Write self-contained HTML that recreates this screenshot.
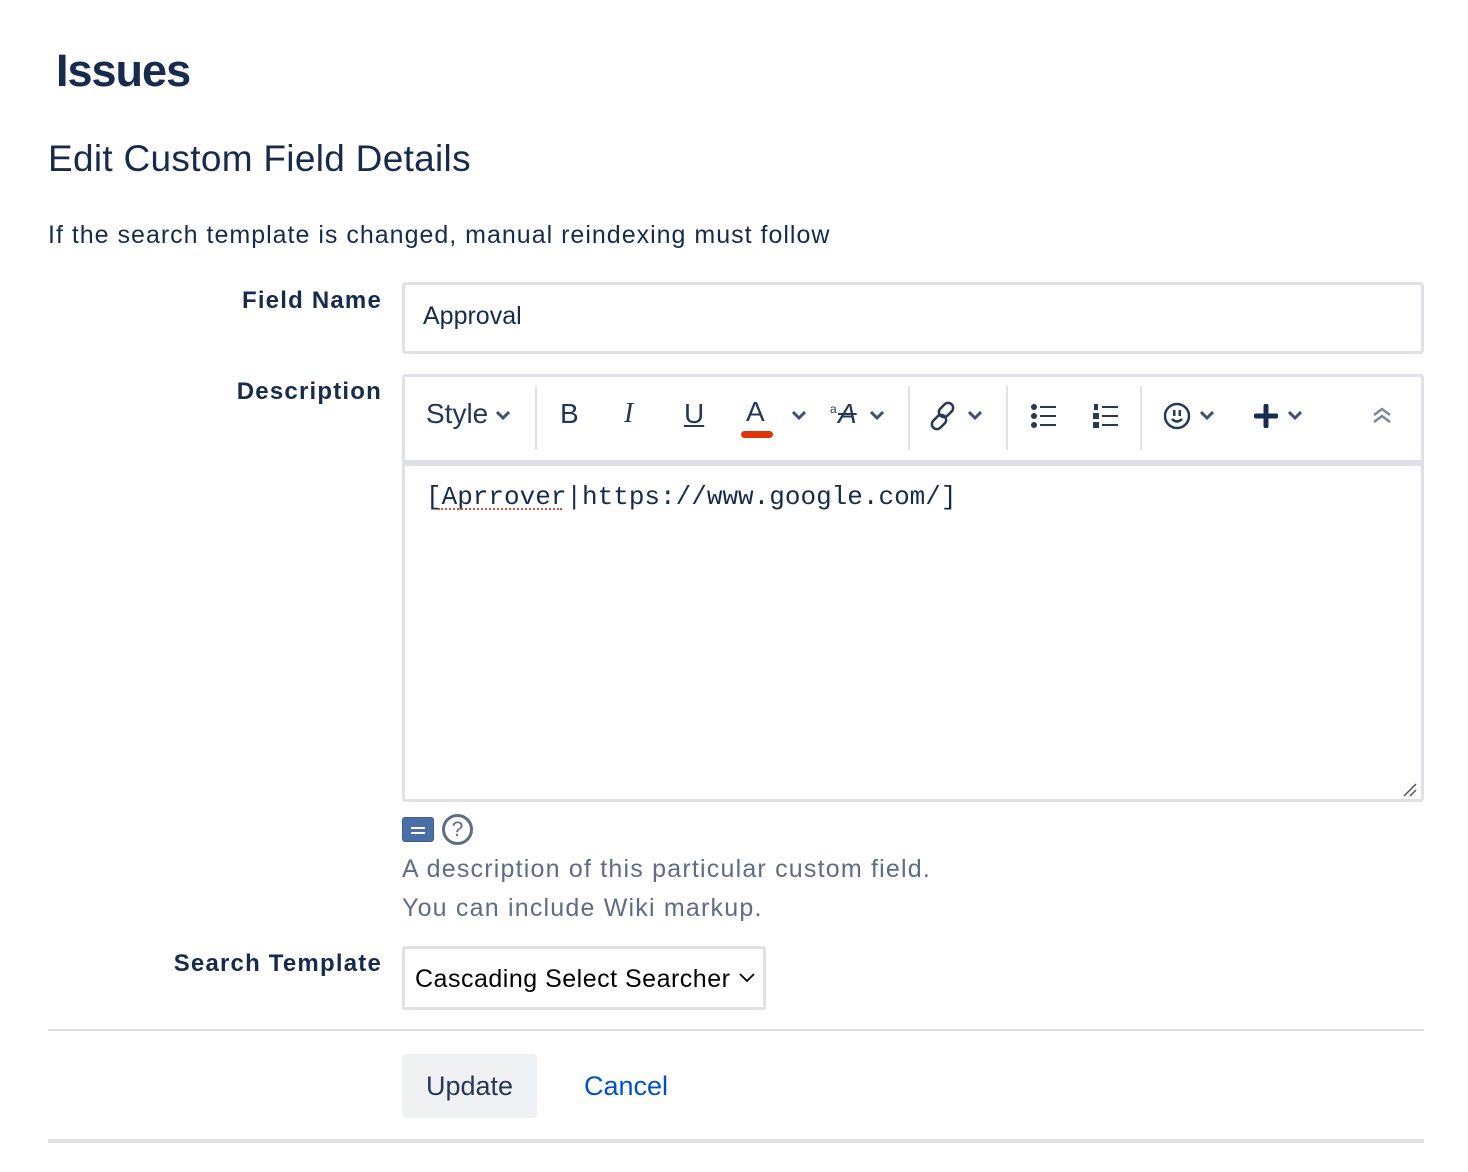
<!DOCTYPE html>
<html><head><meta charset="utf-8"><style>
*{box-sizing:border-box;margin:0;padding:0}
body{width:1468px;height:1172px;background:#fff;font-family:"Liberation Sans",sans-serif;color:#172b4d;position:relative;overflow:hidden}
.a{position:absolute}
h1{position:absolute;left:56px;top:45px;font-size:45px;font-weight:600;letter-spacing:-1px}
h2{position:absolute;left:48px;top:138px;font-size:37px;font-weight:500;letter-spacing:0.3px}
.lbl{position:absolute;right:1086px;font-size:24px;font-weight:bold;text-align:right;white-space:nowrap;letter-spacing:1.2px}
.tb{color:#253858;font-size:28px}
.sep{position:absolute;top:386px;width:2px;height:64px;background:#dfe1e6}
.chev{position:absolute;top:408px}
</style></head><body>
<h1>Issues</h1>
<h2>Edit Custom Field Details</h2>
<div class="a" style="left:48px;top:221px;font-size:25px;letter-spacing:1px">If the search template is changed, manual reindexing must follow</div>

<div class="lbl" style="top:287px">Field Name</div>
<div class="a" style="left:402px;top:282px;width:1022px;height:72px;border:3px solid #dfe1e6;border-radius:4px;padding:17px 18px;font-size:25px">Approval</div>

<div class="lbl" style="top:378px">Description</div>
<div class="a" style="left:402px;top:374px;width:1022px;height:428px;border:3px solid #dfe1e6;border-radius:4px"></div>
<div class="a" style="left:405px;top:460px;width:1016px;height:6px;background:#dfe1e6"></div>
<div class="a tb" style="left:426px;top:398px;font-size:28px">Style</div>
<svg class="chev" style="left:494px" width="18" height="14" viewBox="0 0 18 14"><path d="M3 4l6 6 6-6" stroke="#42526e" stroke-width="3" fill="none"/></svg>
<div class="sep" style="left:535px"></div>
<div class="a tb" style="left:560px;top:398px">B</div>
<div class="a tb" style="left:624px;top:398px;font-style:italic;font-family:'Liberation Serif',serif">I</div>
<div class="a tb" style="left:684px;top:398px;text-decoration:underline">U</div>
<div class="a tb" style="left:746px;top:396px">A</div>
<div class="a" style="left:741px;top:431px;width:32px;height:7px;border-radius:4px;background:#de350b"></div>
<svg class="chev" style="left:790px" width="18" height="14" viewBox="0 0 18 14"><path d="M3 4l6 6 6-6" stroke="#42526e" stroke-width="3" fill="none"/></svg>
<div class="a" style="left:830px;top:402px;font-size:12px;color:#253858">a</div>
<div class="a tb" style="left:838px;top:398px;font-style:italic;text-decoration:line-through">A</div>
<svg class="chev" style="left:868px" width="18" height="14" viewBox="0 0 18 14"><path d="M3 4l6 6 6-6" stroke="#42526e" stroke-width="3" fill="none"/></svg>
<div class="sep" style="left:908px"></div>
<svg class="a" style="left:928px;top:400px" width="32" height="32" viewBox="0 0 32 32"><g stroke="#253858" stroke-width="2.5" fill="none"><rect x="13" y="2" width="10" height="16" rx="5" transform="rotate(45 18 10)"/><rect x="6" y="14" width="10" height="16" rx="5" transform="rotate(45 11 22)"/></g></svg>
<svg class="chev" style="left:966px" width="18" height="14" viewBox="0 0 18 14"><path d="M3 4l6 6 6-6" stroke="#42526e" stroke-width="3" fill="none"/></svg>
<div class="sep" style="left:1006px"></div>
<svg class="a" style="left:1030px;top:402px" width="28" height="28" viewBox="0 0 28 28"><g fill="#253858"><circle cx="4" cy="5" r="3"/><circle cx="4" cy="14" r="3"/><circle cx="4" cy="23" r="3"/><rect x="10" y="4" width="16" height="2"/><rect x="10" y="13" width="16" height="2"/><rect x="10" y="22" width="16" height="2"/></g></svg>
<svg class="a" style="left:1092px;top:402px" width="28" height="28" viewBox="0 0 28 28"><g fill="#253858"><rect x="2" y="2" width="4" height="6"/><rect x="1" y="11" width="6" height="6"/><rect x="1" y="20" width="6" height="6"/><rect x="10" y="4" width="16" height="2"/><rect x="10" y="13" width="16" height="2"/><rect x="10" y="22" width="16" height="2"/></g></svg>
<div class="sep" style="left:1140px"></div>
<svg class="a" style="left:1162px;top:401px" width="30" height="30" viewBox="0 0 30 30"><circle cx="15" cy="15" r="12" stroke="#253858" stroke-width="2.5" fill="none"/><rect x="11" y="9" width="2.5" height="6" fill="#253858"/><rect x="16.5" y="9" width="2.5" height="6" fill="#253858"/><path d="M10 18q5 5 10 0" stroke="#253858" stroke-width="2.5" fill="none"/></svg>
<svg class="chev" style="left:1198px" width="18" height="14" viewBox="0 0 18 14"><path d="M3 4l6 6 6-6" stroke="#42526e" stroke-width="3" fill="none"/></svg>
<svg class="a" style="left:1254px;top:404px" width="24" height="24" viewBox="0 0 24 24"><path d="M12 2v20M2 12h20" stroke="#172b4d" stroke-width="5" stroke-linecap="round"/></svg>
<svg class="chev" style="left:1286px" width="18" height="14" viewBox="0 0 18 14"><path d="M3 4l6 6 6-6" stroke="#42526e" stroke-width="3" fill="none"/></svg>
<svg class="a" style="left:1370px;top:406px" width="24" height="20" viewBox="0 0 24 20"><path d="M4 9l8-6 8 6M4 16l8-6 8 6" stroke="#7a869a" stroke-width="2.5" fill="none"/></svg>
<div class="a" style="left:426px;top:482px;font-family:'Liberation Mono',monospace;font-size:26px;color:#172b4d">[Aprrover|https://www.google.com/]</div>
<div class="a" style="left:438px;top:508px;width:124px;border-top:2px dotted #e5493a"></div>
<svg class="a" style="left:1402px;top:782px" width="16" height="16" viewBox="0 0 16 16"><path d="M2 14L14 2M8 14L14 8" stroke="#555" stroke-width="1.5"/></svg>

<div class="a" style="left:402px;top:817px;width:32px;height:25px;background:#4a6fa5;border-radius:3px;border:1px solid #3d5f8f"></div>
<div class="a" style="left:411px;top:827px;width:14px;height:2px;background:#fff"></div>
<div class="a" style="left:411px;top:832px;width:14px;height:2px;background:#fff"></div>
<div class="a" style="left:442px;top:814px;width:31px;height:31px;border:3px solid #5e6c84;border-radius:50%;text-align:center;font-size:21px;line-height:26px;color:#5e6c84">?</div>
<div class="a" style="left:402px;top:850px;font-size:25px;color:#5e6c84;line-height:39px;letter-spacing:1.2px">A description of this particular custom field.<br>You can include Wiki markup.</div>

<div class="lbl" style="top:950px">Search Template</div>
<div class="a" style="left:402px;top:946px;width:364px;height:64px;border:3px solid #dfe1e6;border-radius:3px;padding:16px 10px;font-size:25px;color:#000;letter-spacing:0.5px">Cascading Select Searcher</div>
<svg class="a" style="left:738px;top:971px" width="18" height="12" viewBox="0 0 18 12"><path d="M2 3l7 7 7-7" stroke="#000" stroke-width="1.8" fill="none"/></svg>

<div class="a" style="left:48px;top:1029px;width:1376px;height:2px;background:#dfe1e6"></div>
<div class="a" style="left:402px;top:1054px;width:135px;height:64px;background:#f0f1f3;border-radius:4px;text-align:center;line-height:64px;font-size:27px;color:#253858">Update</div>
<div class="a" style="left:584px;top:1054px;line-height:64px;font-size:27px;color:#0052cc">Cancel</div>
<div class="a" style="left:48px;top:1139px;width:1376px;height:4px;background:#dfe1e6"></div>
</body></html>
